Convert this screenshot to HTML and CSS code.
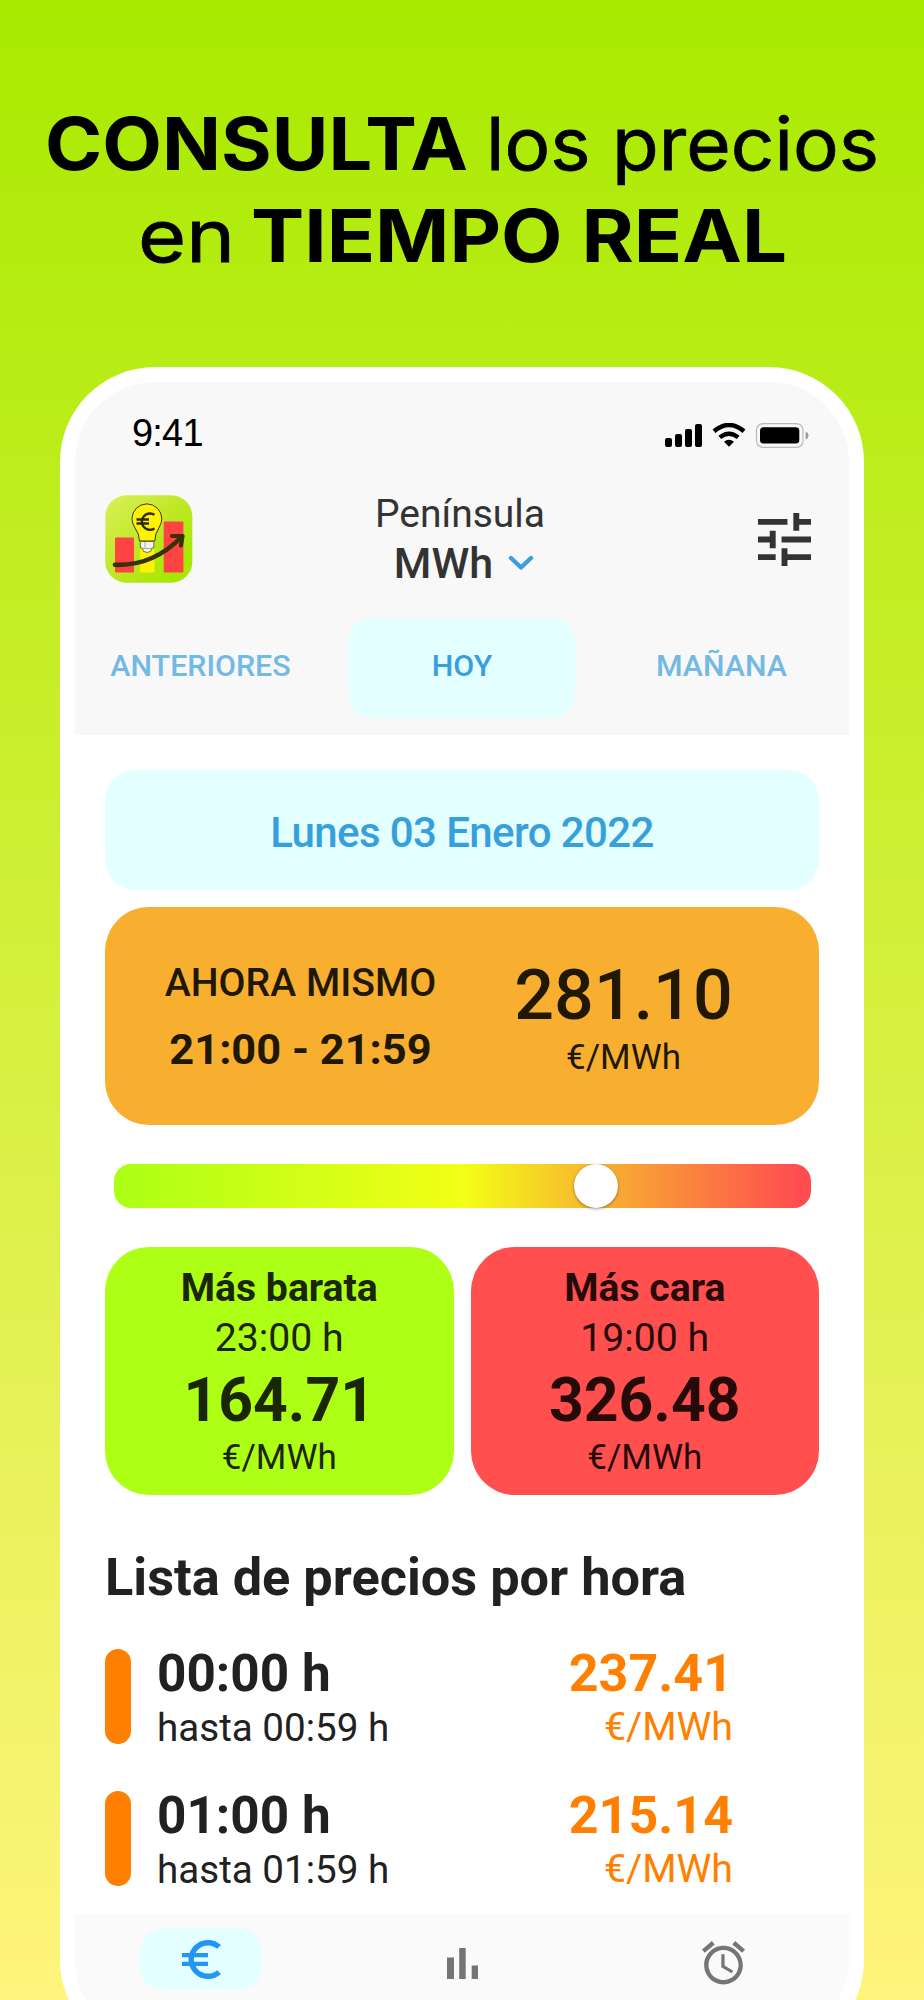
FILE: index.html
```html
<!DOCTYPE html>
<html lang="es">
<head>
<meta charset="utf-8">
<title>Precios en tiempo real</title>
<link rel="stylesheet" href="styles.css">
</head>
<body>
<main class="page">
  <h1 class="headline">
    <svg class="headline-art" viewBox="0 0 924 367" width="924" height="367">
      <text class="strong" x="45" y="169.500" textLength="423" lengthAdjust="spacingAndGlyphs">CONSULTA</text>
      <text class="light" x="486" y="169.500" textLength="393" lengthAdjust="spacingAndGlyphs">los precios</text>
      <text class="light" x="138" y="261.500" textLength="97" lengthAdjust="spacingAndGlyphs">en</text>
      <text class="strong" x="251" y="261.500" textLength="536" lengthAdjust="spacingAndGlyphs">TIEMPO REAL</text>
    </svg>
  </h1>
  <section class="phone">
    <header class="top">
      <div class="status">
        <span class="clock">9:41</span>
        <svg class="status-icons" viewBox="0 0 144 26" width="144" height="26">
          <rect x="0" y="15" width="7" height="9" rx="2"/>
          <rect x="10" y="11" width="7" height="13" rx="2"/>
          <rect x="20" y="6" width="7" height="18" rx="2"/>
          <rect x="30" y="1" width="7" height="23" rx="2"/>
          <g fill="none" stroke="#000" stroke-width="4.400">
            <path d="M49 8.200 Q64 -4.200 79 8.200"/>
            <path d="M54.800 14.400 Q64 7 73.200 14.400"/>
          </g>
          <path d="M59 18.800 Q64 14.800 69 18.800 L64 23.800Z"/>
          <rect x="91.500" y="0.600" width="46.500" height="23.800" rx="6.500" fill="none" stroke="#b9b9b9" stroke-width="1.200"/>
          <rect x="95" y="4.200" width="39.300" height="16.200" rx="3.500"/>
          <path d="M140.600 8.600 Q143.600 9.800 143.600 12.400 Q143.600 15 140.600 16.400Z" fill="#9b9b9b"/>
        </svg>
      </div>
      <div class="titlebar">
        <svg class="logo" viewBox="0 0 88 88" width="88" height="88">
          <defs>
            <linearGradient id="logo-bg" x1="0" y1="0" x2="1" y2="1">
              <stop offset="0" stop-color="#dcef5a"/>
              <stop offset="0.5" stop-color="#bde824"/>
              <stop offset="0.85" stop-color="#a5e800"/>
            </linearGradient>
          </defs>
          <rect x="0.3" y="0.3" width="87" height="87.4" rx="21" fill="url(#logo-bg)"/>
          <rect x="10" y="42.500" width="19" height="35" rx="1" fill="#ff4343"/>
          <rect x="35" y="52" width="14.500" height="25.500" rx="1" fill="#fff200"/>
          <rect x="58.700" y="26.500" width="19.700" height="51" rx="1" fill="#ff4343"/>
          <path d="M34.500 46 Q34.500 39 29.500 32 Q27 28 27 23.800 A14.800 14.800 0 0 1 56.800 23.800 Q56.800 28 54.300 32 Q49.800 39 49.800 46Z" fill="#fff200" stroke="#3d3710" stroke-width="1"/>
          <path d="M35.300 46.500h13.500v6.500h-2l-1 3.300q-3.700 2.400-7.400 0l-1-3.300h-2z" fill="#f2f2ee" stroke="#55513a" stroke-width="0.800"/>
          <path d="M40 47v6M37.500 53.500h9" stroke="#aaa" stroke-width="1"/>
          <path d="M49.500 19.800 A8.200 8.200 0 1 0 49.500 33.500M31.500 24.500H44M31.500 28.500H44" fill="none" stroke="#2f2a08" stroke-width="2.400"/>
          <path d="M10 69.800 C39 71 60 59 77 41.500" fill="none" stroke="#3a3008" stroke-width="4.600" stroke-linecap="round"/>
          <path d="M67 41 L77.500 41 L76 50.500" fill="none" stroke="#3a3008" stroke-width="4.200" stroke-linecap="round" stroke-linejoin="round"/>
        </svg>
        <div class="zone">
          <span class="region">Península</span>
          <span class="unit-pick"><b class="unit-name">MWh</b>
            <svg viewBox="0 0 26 16" width="26" height="16"><path d="M3 3 L13 12.500 L23 3" fill="none" stroke="#3b9fdd" stroke-width="4.400" stroke-linecap="round" stroke-linejoin="round"/></svg>
          </span>
        </div>
        <svg class="tune" viewBox="3 3 18 18" width="53" height="53" fill="#333"><path d="M3 17v2h6v-2H3zM3 5v2h10V5H3zm10 16v-2h8v-2h-8v-2h-2v6h2zM7 9v2H3v2h4v2h2V9H7zm14 4v-2H11v2h10zm-6-4h2V7h4V5h-4V3h-2v6z"/></svg>
      </div>
      <nav class="tabs">
        <span class="tab">ANTERIORES</span>
        <span class="tab active">HOY</span>
        <span class="tab">MAÑANA</span>
      </nav>
    </header>
    <div class="content">
      <div class="date">Lunes 03 Enero 2022</div>
      <div class="now">
        <div class="now-time"><span class="now-label">AHORA MISMO</span><span class="now-range">21:00 - 21:59</span></div>
        <div class="now-price"><span class="now-value">281.10</span><span class="per">€/MWh</span></div>
      </div>
      <div class="scale"><span class="thumb"></span></div>
      <div class="extremes">
        <div class="card low"><span class="kind">Más barata</span><span class="hour">23:00 h</span><span class="value">164.71</span><span class="per">€/MWh</span></div>
        <div class="card high"><span class="kind">Más cara</span><span class="hour">19:00 h</span><span class="value">326.48</span><span class="per">€/MWh</span></div>
      </div>
      <h2 class="list-title">Lista de precios por hora</h2>
      <div class="row">
        <span class="level"></span>
        <div class="when"><span class="from">00:00 h</span><span class="until">hasta 00:59 h</span></div>
        <div class="price"><span class="amount">237.41</span><span class="amount-unit">€/MWh</span></div>
      </div>
      <div class="row">
        <span class="level"></span>
        <div class="when"><span class="from">01:00 h</span><span class="until">hasta 01:59 h</span></div>
        <div class="price"><span class="amount">215.14</span><span class="amount-unit">€/MWh</span></div>
      </div>
    </div>
    <footer class="bottom">
      <div class="nav-item current">
        <span class="nav-icon"><span class="nav-pill">
          <svg viewBox="3 3 18 18" width="39" height="39" fill="#2196f3"><path d="M15 18.500c-2.510 0-4.680-1.420-5.760-3.500H15v-2H8.580c-.05-.33-.08-.66-.08-1s.03-.67.08-1H15V9H9.240C10.320 6.920 12.500 5.500 15 5.500c1.610 0 3.090.59 4.230 1.570L21 5.300C19.410 3.870 17.300 3 15 3c-3.920 0-7.240 2.510-8.480 6H3v2h3.060c-.04.33-.06.66-.06 1s.02.67.06 1H3v2h3.520c1.240 3.490 4.560 6 8.480 6 2.310 0 4.410-.87 6-2.300l-1.780-1.770c-1.130.98-2.600 1.570-4.220 1.570z"/></svg>
        </span></span>
      </div>
      <div class="nav-item">
        <span class="nav-icon"><svg class="nav-bars" viewBox="0 0 31 31" width="31" height="31" fill="#757575"><path d="M0 9.500h7v21.500H0zM12.200 0h6.500v31h-6.500zM24.700 17.500H31V31h-6.300z"/></svg></span>
        <span class="nav-label">Evolución</span>
      </div>
      <div class="nav-item">
        <span class="nav-icon"><svg class="nav-alarm" viewBox="2 1.860 20 20.140" width="43" height="43.500" fill="#757575"><path d="M22 5.720l-4.600-3.860-1.290 1.530 4.600 3.860L22 5.720zM7.880 3.390L6.600 1.860 2 5.710l1.290 1.530 4.590-3.850zM12.500 8H11v6l4.750 2.850.75-1.230-4-2.370V8zM12 4c-4.970 0-9 4.030-9 9s4.020 9 9 9c4.970 0 9-4.030 9-9s-4.030-9-9-9zm0 16c-3.870 0-7-3.130-7-7s3.130-7 7-7 7 3.130 7 7-3.130 7-7 7z"/></svg></span>
        <span class="nav-label">Alertas</span>
      </div>
    </footer>
  </section>
</main>
</body>
</html>
```
FILE: styles.css
```css
* { box-sizing: border-box; }
body { margin: 0; font-family: Roboto, "Liberation Sans", sans-serif; }
.page {
  width: 924px; height: 2000px; overflow: hidden;
  display: flex; flex-direction: column; align-items: center;
  background: linear-gradient(#a8ea00, #ccef30 40%, #fff47c);
}
.headline { margin: 0; height: 367px; flex: none; }
.headline-art { display: block; font-family: Inter, sans-serif; font-size: 72.500px; fill: #000; }
.strong { font-weight: 700; }
.light { font-weight: 400; stroke: #000; stroke-width: 0.800px; }
.phone {
  flex: none; width: 804px; height: 1688px; overflow: hidden;
  border: 15px solid #fff; border-radius: 95px; background: #fff;
  display: flex; flex-direction: column;
}
.top { height: 353px; background: #f8f8f8; flex: none; display: flex; flex-direction: column; }
.status { height: 113px; padding: 27px 40px 0 57px; display: flex; justify-content: space-between; }
.clock { font: 38px/48px "Liberation Sans", sans-serif; letter-spacing: -0.800px; color: #000; }
.status-icons { margin-top: 14px; }
.titlebar { height: 88px; padding: 0 38px 0 30px; display: flex; justify-content: space-between; align-items: center; }
.zone { display: flex; flex-direction: column; align-items: center; color: #333; margin-right: 31px; }
.region { font-size: 39px; line-height: 48px; }
.unit-pick { display: flex; align-items: center; gap: 15px; margin-left: 8px; }
.unit-name { font-size: 43px; font-weight: 500; line-height: 50px; }
.tune { display: block; }
.tabs { display: grid; grid-template-columns: 245px 226px 1fr; column-gap: 26px; padding: 35px 7px 0 3px; height: 135px; }
.tab { color: #72b9e5; font-size: 30.400px; font-weight: 500; height: 100px; line-height: 96px; text-align: center; }
.active { background: #e3ffff; color: #369fdc; border-radius: 22px; }
.content { padding: 35px 30px 0 30px; height: 1179px; flex: none; display: flex; flex-direction: column; }
.date { height: 120px; line-height: 126px; border-radius: 30px; background: #e3ffff; color: #369fdc; font-size: 42px; letter-spacing: -0.600px; font-weight: 500; text-align: center; }
.now { margin-top: 17px; height: 218px; border-radius: 44px; background: #f8af30; color: #211804; display: flex; }
.now-time { width: 391px; padding-top: 48px; display: flex; flex-direction: column; align-items: center; }
.now-label { font-size: 39.200px; font-weight: 500; line-height: 56px; }
.now-range { font-size: 43.400px; font-weight: 700; line-height: 77px; }
.now-price { width: 255px; padding-top: 46px; display: flex; flex-direction: column; align-items: center; }
.now-value { font-size: 70px; font-weight: 500; line-height: 85px; }
.per { font-size: 35px; line-height: 40px; }
.scale { position: relative; margin: 39px 8px 0 9px; height: 44px; border-radius: 17px; background: linear-gradient(90deg, #acff16, #f3ff16 50%, #f8b030 70%, #ff4d4f 98%); }
.thumb { position: absolute; left: 460px; top: 0; width: 44px; height: 44px; border-radius: 50%; background: #fff; box-shadow: 0 1px 3px rgba(0,0,0,.4); }
.extremes { margin-top: 39px; display: flex; gap: 17px; }
.card { flex: 1; height: 248px; border-radius: 44px; padding-top: 16px; display: flex; flex-direction: column; align-items: center; }
.low { background: #aeff16; color: #1a2604; }
.high { background: #ff4f4f; color: #260a0a; }
.kind { font-size: 39.200px; font-weight: 700; line-height: 50px; }
.hour { font-size: 39.200px; line-height: 50px; }
.value { font-size: 60.700px; font-weight: 700; line-height: 75px; }
.list-title { margin: 52px 0 0; font-size: 52.300px; line-height: 60px; font-weight: 700; color: #212121; }
.row { margin-top: 42px; height: 99.700px; display: flex; }
.level { width: 26px; height: 95px; border-radius: 13px; background: #ff8000; }
.when { margin-left: 26px; width: 300px; display: flex; flex-direction: column; color: #212121; }
.from { font-size: 51.300px; font-weight: 700; line-height: 50px; }
.until { font-size: 38.600px; line-height: 57px; }
.price { width: 276px; display: flex; flex-direction: column; align-items: flex-end; color: #ff8000; }
.amount { font-size: 52px; font-weight: 700; line-height: 50px; }
.amount-unit { font-size: 39.300px; line-height: 57px; }
.bottom { height: 141px; background: #fafafa; flex: none; display: grid; grid-template-columns: 252px 1fr 252px; }
.nav-item { display: flex; flex-direction: column; align-items: center; color: #757575; }
.nav-icon { height: 82px; display: flex; align-items: flex-start; }
.nav-label { font-size: 28px; line-height: 32px; }
.nav-pill { width: 122px; height: 62px; margin-top: 14px; border-radius: 24px; background: #e3ffff; display: flex; justify-content: center; align-items: center; }
.nav-bars { margin-top: 34px; }
.nav-alarm { margin-top: 27px; }
```
